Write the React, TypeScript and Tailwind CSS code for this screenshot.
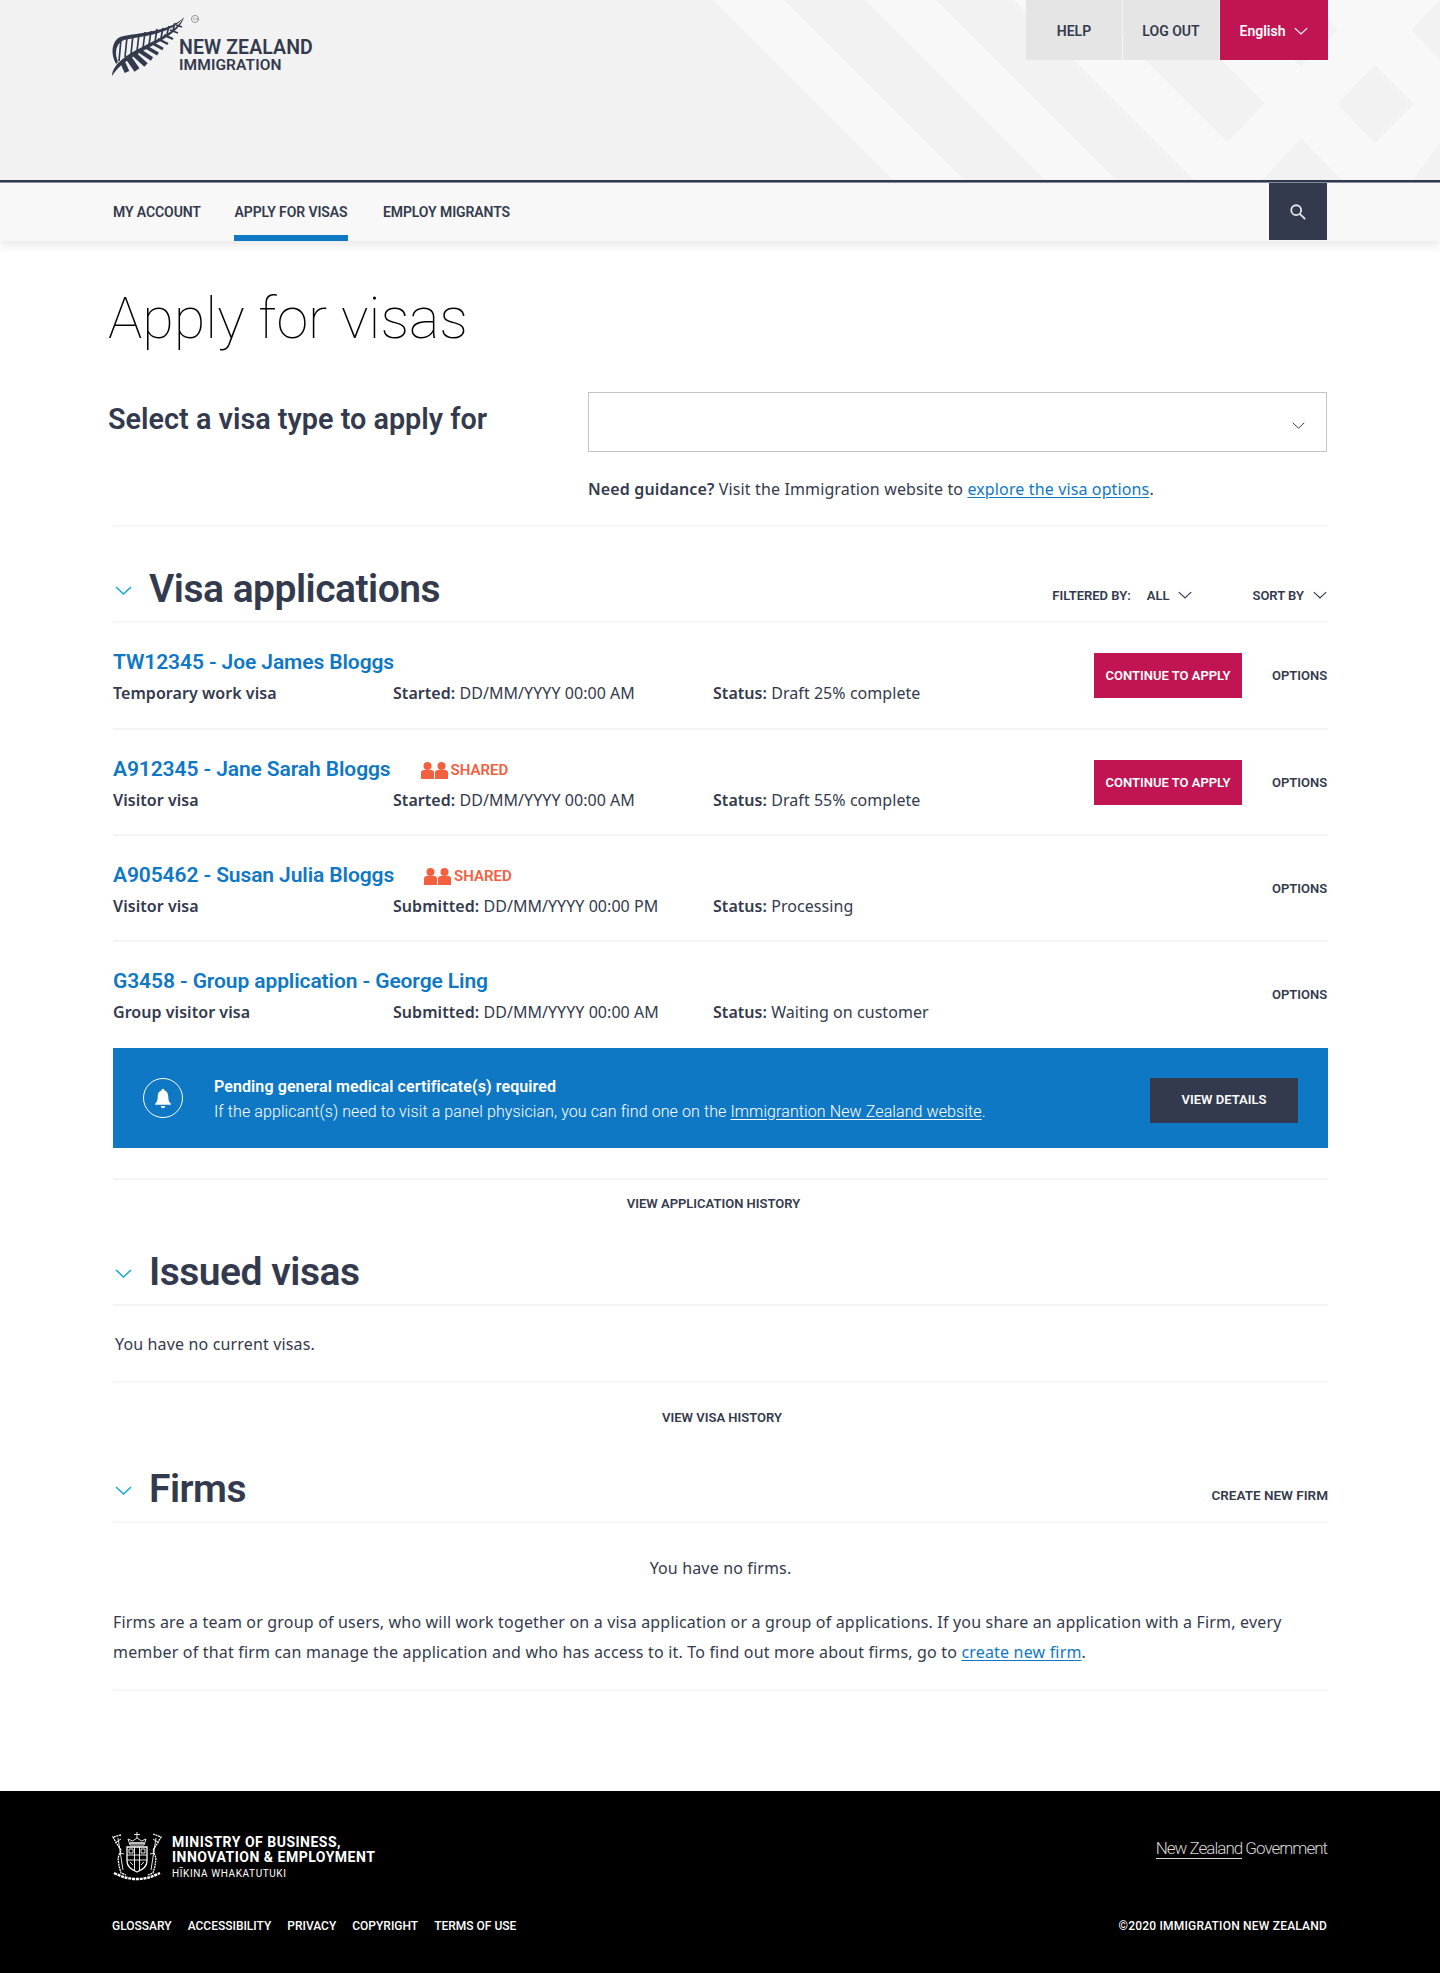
const head = "font-['Roboto',sans-serif]";
const body = "font-['Noto_Sans',sans-serif]";

const Chevron = ({ className, color = "#333a4d", width = 1.5 }: { className: string; color?: string; width?: number }) => (
  <svg viewBox="0 0 17 9" className={className} fill="none" stroke={color} strokeWidth={width}>
    <path d="M1 1l7.500 7L16 1" />
  </svg>
);

const Fern = () => {
  const ribs = [
    [121, 38, 119, 60],
    [127, 36, 125, 56],
    [133, 34, 131, 53],
    [139, 33, 137, 50],
    [145, 31, 143, 47],
    [151, 30, 149, 44],
    [157, 28, 155, 41],
    [163, 27, 161, 37],
    [169, 25, 167, 33],
    [175, 22, 173, 29],
  ];
  const low = [
    [122, 60, 127, 71, 5],
    [128, 56, 137, 69, 6],
    [134, 53, 146, 64, 5],
    [140, 50, 152, 58, 4],
    [146, 46, 158, 53, 3.5],
    [152, 42, 163, 48, 3],
    [158, 38, 168, 43, 2.5],
    [164, 34, 173, 38, 2.2],
    [170, 29, 178, 32, 1.8],
    [176, 24, 182, 26, 1.5],
  ];
  return (
    <svg viewBox="108 10 100 70" className="h-[70px] w-[100px] shrink-0">
      <path d="M112 75C113 62 128 53 146 44C162 36 176 30 184 16C181 28 166 37 150 46C134 55 120 62 112 75Z" fill="#333a4d" />
      <path d="M116 63C110 52 112 40 120 36C140 31 170 31 184 16C172 33 144 35 124 39C116 42 114 52 118 61Z" fill="#333a4d" />
      {ribs.map(([a, b, c, d]) => (
        <line key={a} x1={a} y1={b} x2={c} y2={d} stroke="#333a4d" strokeWidth="1.700" />
      ))}
      {low.map(([a, b, c, d, w]) => (
        <line key={a} x1={a} y1={b} x2={c} y2={d} stroke="#333a4d" strokeWidth={w} />
      ))}
      <circle cx="195" cy="18" r="3.600" fill="none" stroke="#777" strokeWidth="0.700" />
      <path d="M193 17h2M194 17v2.500M196 19.500v-2.500l1 1.500 1-1.500v2.500" fill="none" stroke="#777" strokeWidth="0.400" />
    </svg>
  );
};

const Crest = () => (
  <svg viewBox="0 0 52 50" className="-ml-[2px] h-[50px] w-[54px] shrink-0" fill="none" stroke="#fff" strokeWidth="0.900">
    <path d="M26 1v6M23 3.500h6M19 14l-2-6 4.500 2 4.500-3 4.500 3 4.500-2-2 6Z" />
    <path d="M19 12h14" strokeWidth="1.500" />
    <path d="M16 16h20v14c0 6-5 9-10 11-5-2-10-5-10-11Z" strokeWidth="1.300" />
    <path d="M23.500 16v24M28.500 16v24M16 24h20M16 29h20" />
    <path d="M18 18h4v4h-4ZM30 18h4v4h-4ZM19 31l3 3M33 31l-3 3" />
    <path d="M10 4 2 6l4 7 4 6-3 8 1 8 2 7 5 2" strokeDasharray="2 0.700" strokeWidth="1.300" />
    <path d="M42 3l8 3-4 7-4 6 3 8-1 8-2 7-5 2" strokeDasharray="2 0.700" strokeWidth="1.300" />
    <path d="M7 7l5 32M45 7l-5 32M4 12l6-4M48 12l-6-4M9 22l4 1M43 22l-4 1" />
    <path d="M3 42c8 4 15 6 23 6s15-2 23-6" strokeWidth="2.400" strokeDasharray="3 0.800" />
  </svg>
);

const People = () => (
  <svg viewBox="0 0 27 17" className="h-[17px] w-[27px]" fill="#f2603f">
    <circle cx="6.500" cy="4" r="4" />
    <path d="M0 17v-6.500C0 9 1 8 3 8h7c2 0 3 1 3 2.500V17Z" />
    <circle cx="20.500" cy="4" r="4" />
    <path d="M14 17v-6.500C14 9 15 8 17 8h7c2 0 3 1 3 2.500V17Z" />
  </svg>
);

const Bell = () => (
  <div className="flex h-10 w-10 items-center justify-center rounded-full border border-white">
    <svg viewBox="0 0 20 24" className="h-[21px] w-[18px]" fill="#fff">
      <path d="M10 1a1.600 1.600 0 0 1 1.600 1.800C15 3.600 16 7 16 10c0 4 1 6 3 8v1H1v-1c2-2 3-4 3-8 0-3 1-6.400 4.400-7.200A1.600 1.600 0 0 1 10 1Z" />
      <path d="M7.500 20.500h5a2.500 2.500 0 0 1-5 0Z" />
    </svg>
  </div>
);

type RowProps = {
  title: string;
  kind: string;
  dateLabel: string;
  date: string;
  status: string;
  height: string;
  shared?: boolean;
  action?: boolean;
  last?: boolean;
};

const Row = ({ title, kind, dateLabel, date, status, height, shared, action, last }: RowProps) => (
  <div className={`flex justify-between pr-px ${height} ${last ? "" : "border-b-2 border-[#f5f5f5]"}`}>
    <div className="pt-[26px]">
      <div className="flex h-7 items-center">
        <a className={`${head} text-[21px] font-semibold tracking-[-0.1px] text-[#0f78c4]`}>{title}</a>
        {shared && (
          <span className="ml-[30px] flex items-center">
            <People />
            <span className={`${head} ml-[3px] text-[15px] font-semibold text-[#f2603f]`}>SHARED</span>
          </span>
        )}
      </div>
      <div className="mt-[4px] flex h-6 items-center text-[16px] tracking-[0.05px] text-[#333a4d]">
        <div className="w-[280px] font-semibold">{kind}</div>
        <div className="w-[320px]">
          <span className="font-semibold">{dateLabel}</span> {date}
        </div>
        <div>
          <span className="font-semibold">Status:</span> {status}
        </div>
      </div>
    </div>
    <div className="mt-[30px] flex h-[45px] items-center">
      {action && (
        <button className={`${head} mr-[30px] h-[45px] w-[148px] bg-[#c01552] text-[13px] font-semibold text-white`}>
          CONTINUE TO APPLY
        </button>
      )}
      <span className={`${head} w-[55px] text-right text-[13px] font-semibold text-[#333a4d]`}>OPTIONS</span>
    </div>
  </div>
);

const SectionHead = ({ title, height, right }: { title: string; height: string; right?: React.ReactNode }) => (
  <div className={`flex items-end justify-between border-b-2 border-[#f5f5f5] pb-[8px] ${height}`}>
    <div className="flex h-12 items-center">
      <Chevron className="mt-[3px] ml-[2px] h-[9px] w-[17px]" color="#1ba9d8" width={1.6} />
      <h2 className={`${head} ml-[17px] text-[39px] leading-[48px] font-semibold tracking-[-0.5px] text-[#333a4d]`}>{title}</h2>
    </div>
    {right}
  </div>
);

export default function App() {
  return (
    <div className={`${body} w-[1440px] bg-white text-[#333a4d]`}>
      <header className="relative h-[180px] overflow-hidden bg-[#f2f2f2]">
        <svg viewBox="0 0 1440 180" className="absolute inset-0 h-[180px] w-[1440px]">
          <path d="M713 0h71l180 180h-71Z" fill="#f8f8f8" />
          <path d="M865 0h71l180 180h-71Z" fill="#f8f8f8" />
          <path d="M1014 0h426v180H1194Z" fill="#f8f8f8" />
          <path d="M1085 0h75l105 103-38 39Z" fill="#f2f2f2" />
          <path d="M1301-7l37 37-37 37-37-37Z" fill="#f2f2f2" />
          <path d="M1375 65l39 39-39 39-38-39Z" fill="#f2f2f2" />
          <path d="M1301 138l41 42h-80Z" fill="#f2f2f2" />
          <path d="M1440 143l-27 37h27ZM1411 30l29-30v60Z" fill="#f2f2f2" />
        </svg>
        <div className="relative flex justify-between pr-[112px] pl-[108px]">
          <div className="flex pt-[11px]">
            <Fern />
            <div className={`${head} -ml-[29px] pt-[29px] font-semibold whitespace-nowrap`}>
              <div className="text-[19.5px] leading-4 tracking-[0.1px]">NEW ZEALAND</div>
              <div className="mt-[1px] text-[15.5px] leading-4 tracking-[0.1px]">IMMIGRATION</div>
            </div>
          </div>
          <div className={`${head} flex h-[60px] gap-px pt-0 text-[14px] font-semibold`}>
            <a className="flex w-[96px] items-center justify-center bg-[#e5e5e5] pt-[2px]">HELP</a>
            <a className="flex w-[96px] items-center justify-center bg-[#e5e5e5] pt-[2px]">LOG OUT</a>
            <a className="flex w-[108px] items-center justify-center gap-[9px] bg-[#c01552] pt-[2px] text-white">
              English <Chevron className="h-[8px] w-[14px]" color="#fff" />
            </a>
          </div>
        </div>
      </header>
      <div className="h-[3px] border-b border-[#8a8fa0] bg-[#333a4d]" />
      <nav className={`${head} relative flex h-[58px] bg-[#f8f8f8] pr-[113px] pl-[113px] text-[14px] font-semibold tracking-[-0.1px] shadow-[0_4px_10px_rgba(0,0,0,0.1)]`}>
        <a className="flex w-[121px] items-center">MY ACCOUNT</a>
        <a className="flex w-[114px] items-center justify-center border-b-[6px] border-[#0f78c4] pt-[6px]">APPLY FOR VISAS</a>
        <a className="ml-[35px] flex items-center">EMPLOY MIGRANTS</a>
        <div className="ml-auto flex h-[57px] w-[58px] items-center justify-center bg-[#333a4d]">
          <svg viewBox="0 0 20 20" className="h-[18px] w-[18px]" fill="none" stroke="#e8e8e8" strokeWidth="2">
            <circle cx="8" cy="8" r="5.500" />
            <path d="m12 12 6 6" />
          </svg>
        </div>
      </nav>

      <main className="mx-[113px] w-[1215px]">
        <h1 className={`${head} mt-[38px] -ml-[5px] h-20 text-[57.5px] leading-20 font-thin text-black`}>Apply for visas</h1>
        <div className="mt-[33px] flex">
          <h3 className={`${head} -ml-[5px] h-[60px] w-[480px] pt-[6px] text-[28.8px] font-semibold text-[#333a4d]`}>Select a visa type to apply for</h3>
          <div className="flex h-[60px] w-[739px] items-center justify-end border border-[#c4c4c4] pr-[21px]">
            <Chevron className="mt-[6px] h-[7px] w-[13px]" width={1.3} />
          </div>
        </div>
        <p className="mt-[25px] ml-[475px] h-6 text-[16px] leading-6 tracking-[0.13px]">
          <span className="font-semibold">Need guidance?</span> Visit the Immigration website to{" "}
          <a className="text-[#0f78c4] underline underline-offset-2">explore the visa options</a>.
        </p>
        <div className="mt-[24px] border-b-2 border-[#f5f5f5]" />

        <SectionHead
          title="Visa applications"
          height="h-[96px]"
          right={
            <div className={`${head} mr-px mb-[8px] flex items-center text-[13px] font-semibold`}>
              <span>FILTERED BY:</span>
              <span className="ml-4">ALL</span>
              <Chevron className="ml-[9px] h-[8px] w-[14px]" width={1.4} />
              <span className="ml-[60px]">SORT BY</span>
              <Chevron className="ml-[9px] h-[8px] w-[14px]" width={1.4} />
            </div>
          }
        />
        <Row title="TW12345 - Joe James Bloggs" kind="Temporary work visa" dateLabel="Started:" date="DD/MM/YYYY 00:00 AM" status="Draft 25% complete" height="h-[107px]" action />
        <Row title="A912345 - Jane Sarah Bloggs" kind="Visitor visa" dateLabel="Started:" date="DD/MM/YYYY 00:00 AM" status="Draft 55% complete" height="h-[106px]" shared action />
        <Row title="A905462 - Susan Julia Bloggs" kind="Visitor visa" dateLabel="Submitted:" date="DD/MM/YYYY 00:00 PM" status="Processing" height="h-[106px]" shared />
        <Row title="G3458 - Group application - George Ling" kind="Group visitor visa" dateLabel="Submitted:" date="DD/MM/YYYY 00:00 AM" status="Waiting on customer" height="h-[106px]" last />

        <div className="flex h-[100px] items-center bg-[#0f78c4] pr-[30px] pl-[30px] text-white">
          <Bell />
          <div className="ml-[31px] pt-[2px]">
            <div className={`${head} text-[16px] leading-[25px] font-semibold tracking-[0.1px]`}>Pending general medical certificate(s) required</div>
            <div className={`${head} text-[16px] leading-[25px] font-light tracking-[0.1px]`}>
              If the applicant(s) need to visit a panel physician, you can find one on the <a className="underline underline-offset-2">Immigrantion New Zealand website</a>.
            </div>
          </div>
          <button className={`${head} mt-[4px] ml-auto h-[45px] w-[148px] bg-[#333a4d] text-[13px] font-semibold text-white`}>VIEW DETAILS</button>
        </div>
        <div className="mt-[30px] border-b-2 border-[#f5f5f5]" />

        <div className={`${head} flex h-[48px] items-center justify-center pr-[14px] text-[13px] font-semibold`}>VIEW APPLICATION HISTORY</div>
        <SectionHead title="Issued visas" height="h-[78px]" />
        <div className="flex h-[77px] items-center border-b-2 border-[#f5f5f5] pl-[2px] text-[16px] tracking-[0.15px]">You have no current visas.</div>
        <div className={`${head} flex h-[70px] items-center justify-center pl-[3px] text-[13px] font-semibold`}>VIEW VISA HISTORY</div>
        <SectionHead
          title="Firms"
          height="h-[70px]"
          right={<span className={`${head} mb-[8px] text-[13.5px] font-semibold`}>CREATE NEW FIRM</span>}
        />
        <p className="mt-[33px] h-6 text-center text-[16px] leading-6 tracking-[0.15px]">You have no firms.</p>
        <p className="mt-[27px] text-[16px] leading-[30px] tracking-[0.18px]">
          Firms are a team or group of users, who will work together on a visa application or a group of applications. If you share an application with a Firm, every member of that firm can manage the application and who has access to it. To find out more about firms, go to{" "}
          <a className="text-[#0f78c4] underline underline-offset-2">create new firm</a>.
        </p>
        <div className="mt-[22px] border-b-2 border-[#f5f5f5]" />
      </main>

      <footer className="mt-[100px] h-[182px] bg-black pt-[40px] pr-[113px] pl-[112px] text-white">
        <div className="flex items-start justify-between">
          <div className="flex">
            <Crest />
            <div className={`${head} ml-[8px] pt-[4px] leading-[15px]`}>
              <div className="text-[14px] font-bold tracking-[0.5px]">MINISTRY OF BUSINESS,</div>
              <div className="text-[14px] font-bold tracking-[0.5px]">INNOVATION &amp; EMPLOYMENT</div>
              <div className="mt-px text-[10px] tracking-[0.6px]">HĪKINA WHAKATUTUKI</div>
            </div>
          </div>
          <div className={`${head} mt-[5px] text-[17px] leading-6 font-light tracking-[-1px] text-[#d8d8d8]`}>
            <span className="border-b border-[#d8d8d8]">New Zealand</span> Government
          </div>
        </div>
        <div className={`${head} mt-[36px] flex justify-between text-[12px] font-medium`}>
          <div className="flex gap-4">
            <a>GLOSSARY</a>
            <a>ACCESSIBILITY</a>
            <a>PRIVACY</a>
            <a>COPYRIGHT</a>
            <a>TERMS OF USE</a>
          </div>
          <span className="tracking-[0.2px]">©2020 IMMIGRATION NEW ZEALAND</span>
        </div>
      </footer>
    </div>
  );
}
